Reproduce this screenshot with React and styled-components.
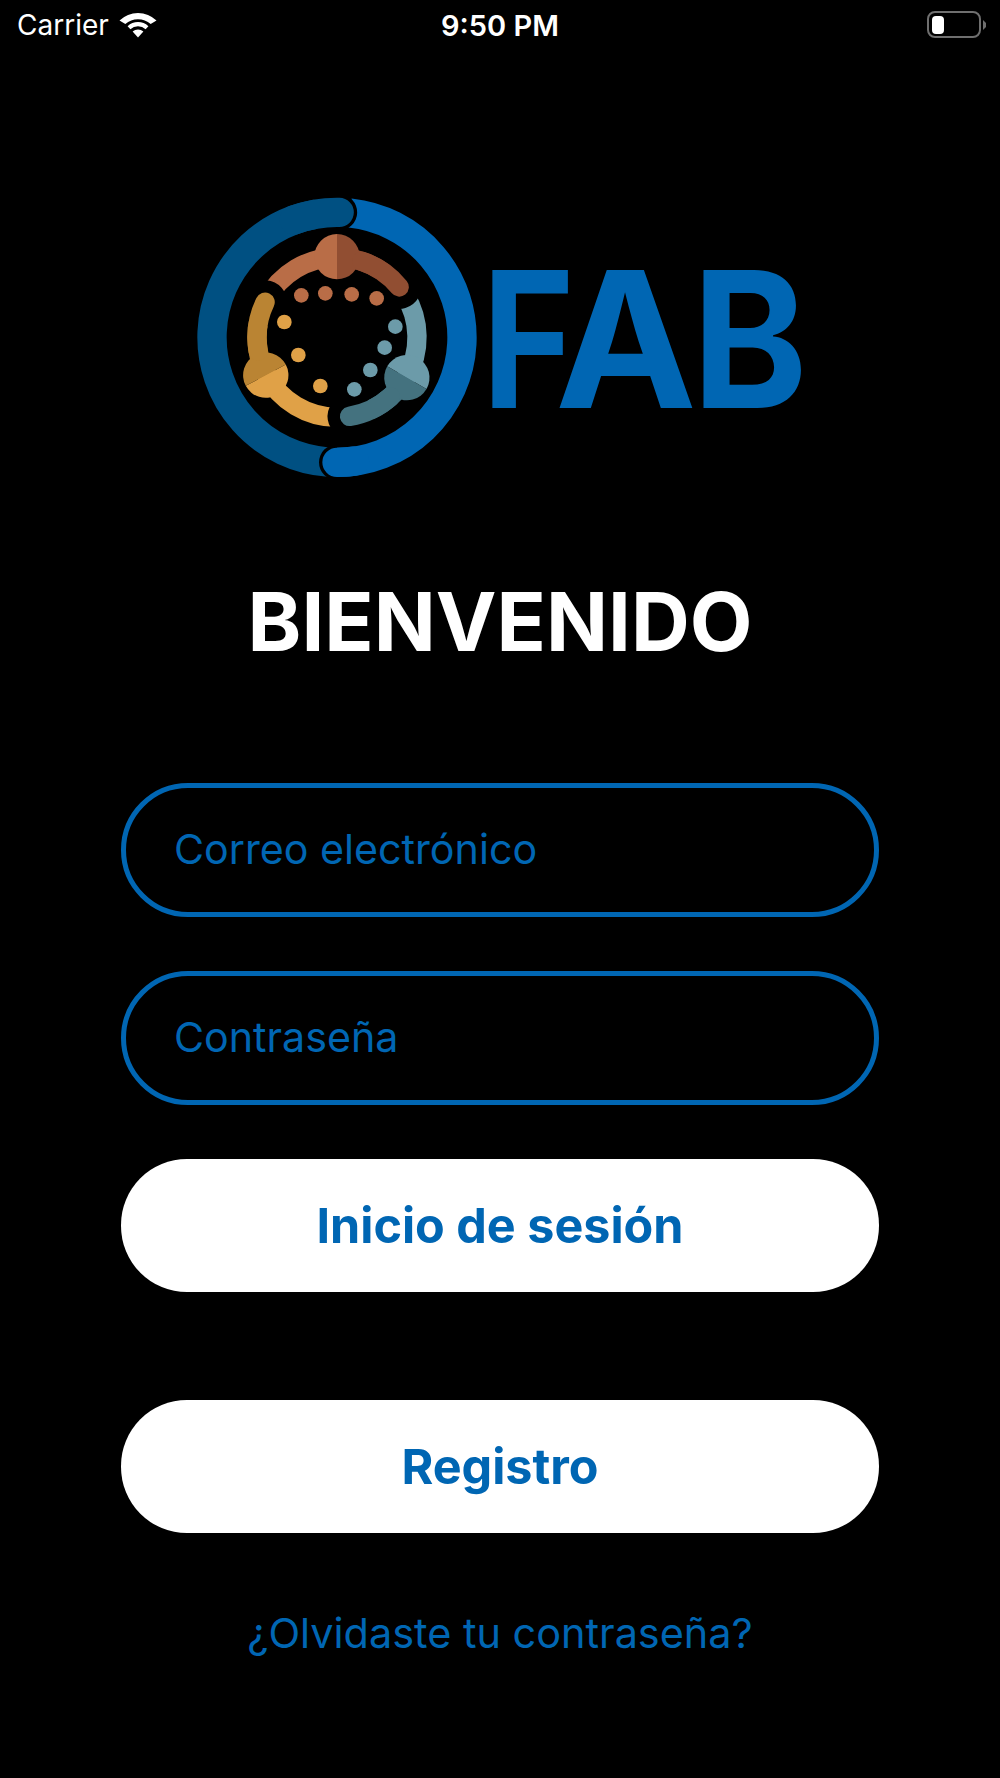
import React from "react";
import styled, { createGlobalStyle } from "styled-components";

const BLUE = "#0066b3";

const GlobalStyle = createGlobalStyle`
  html, body {
    margin: 0;
    padding: 0;
    background: #000;
  }
  * {
    box-sizing: border-box;
  }
`;

const Screen = styled.div`
  display: flex;
  flex-direction: column;
  width: 1000px;
  height: 1778px;
  background: #000;
  font-family: Inter, "Noto Sans", sans-serif;
  overflow: hidden;
`;

const StatusBar = styled.div`
  display: grid;
  grid-template-columns: 1fr auto 1fr;
  align-items: center;
  height: 50px;
  padding: 0 13px;
  color: #fff;
  font-size: 28px;
`;

const StatusLeft = styled.div`
  display: flex;
  align-items: center;
  gap: 10px;
  padding-left: 4px;
`;

const Clock = styled.div`
  font-weight: 600;
  font-size: 29px;
`;

const StatusRight = styled.div`
  display: flex;
  justify-content: flex-end;
`;

const LogoRow = styled.div`
  display: flex;
  align-items: center;
  height: 310px;
  margin-top: 130px;
  padding-left: 180px;
`;

const LogoWord = styled.div`
  display: flex;
  margin-left: 2px;
  margin-top: 8px;
  color: ${BLUE};
  font-weight: 700;
  font-size: 190px;
  line-height: 1;
`;

const LogoLetter = styled.span`
  display: block;
  width: ${(p) => p.$w}px;
  letter-spacing: ${(p) => p.$kern || 0}px;
  transform: scaleX(${(p) => p.$sx});
  transform-origin: left center;
`;

const Title = styled.h1`
  margin: 87px 0 0;
  color: #fff;
  font-size: 81.4px;
  font-weight: 700;
  line-height: 90px;
  text-align: center;
`;

const Form = styled.form`
  display: flex;
  flex-direction: column;
  margin-top: 116px;
  padding: 0 121px;
`;

const Field = styled.input`
  display: block;
  width: 100%;
  height: 134px;
  margin-bottom: 54px;
  padding: 0 48px 3px;
  background: transparent;
  border: 5px solid ${BLUE};
  border-radius: 67px;
  outline: none;
  color: ${BLUE};
  font-family: inherit;
  font-size: 41.2px;

  &::placeholder {
    color: ${BLUE};
    opacity: 1;
  }
`;

const PillButton = styled.button`
  height: 133px;
  margin-top: ${(p) => p.$top}px;
  background: #fff;
  border: 0;
  border-radius: 66px;
  color: ${BLUE};
  font-family: inherit;
  font-size: 48.5px;
  font-weight: 700;
`;

const ForgotLink = styled.a`
  display: block;
  margin-top: 70px;
  color: ${BLUE};
  font-size: 41.4px;
  line-height: 60px;
  text-align: center;
`;

const WifiIcon = () => (
  <svg width="38" height="25" viewBox="0 0 38 25">
    <path d="M19 24.5 L13.6 18.6 A8 8 0 0 1 24.4 18.6 Z" fill="#fff" />
    <path d="M8.6 13.2 A15.2 15.2 0 0 1 29.4 13.2 L26.6 16.3 A11 11 0 0 0 11.4 16.3 Z" fill="#fff" />
    <path d="M0.5 7.6 A26.5 26.5 0 0 1 37.5 7.6 L31.7 11 A19.4 19.4 0 0 0 6.3 11 Z" fill="#fff" />
  </svg>
);

const BatteryIcon = () => (
  <svg width="60" height="28" viewBox="0 0 60 28">
    <rect x="1" y="1" width="52" height="25" rx="7" fill="none" stroke="#6f6f6f" strokeWidth="2" />
    <rect x="5" y="5" width="12" height="18" rx="4" fill="#fff" />
    <path d="M56 9 L59 12 V16 L56 19 Z" fill="#6f6f6f" />
  </svg>
);

const CX = 471;
const CY = 472;

const polar = (deg, r) => {
  const a = (deg * Math.PI) / 180;
  return [CX + r * Math.sin(a), CY - r * Math.cos(a)];
};

// clockwise arc between two angles, measured from twelve o'clock
const arc = (from, to, r) => {
  const [x0, y0] = polar(from, r);
  const [x1, y1] = polar(to, r);
  const large = to - from > 180 ? 1 : 0;
  return `M${x0} ${y0}A${r} ${r} 0 ${large} 1 ${x1} ${y1}`;
};

const FIGURES = [
  { rotate: 0, end: 51, light: "#b96d47", dark: "#914e32" },
  { rotate: 120, end: 51, light: "#6c9ba9", dark: "#44727f" },
  { rotate: 242, end: 54, light: "#e0a147", dark: "#ba8433" },
];

const DOTS = [
  ["#b96d47", [[364, 346], [436, 340], [515, 343], [590, 355]]],
  ["#6c9ba9", [[646, 440], [614, 503], [571, 570], [523, 628]]],
  ["#e0a147", [[313, 426], [355, 525], [421, 618]]],
];

const Stroke = ({ d, color, width, cap = "round" }) => (
  <path d={d} fill="none" stroke={color} strokeWidth={width} strokeLinecap={cap} />
);

const LogoMark = () => (
  <svg width="300" height="310" viewBox="0 0 900 930">
    {/* outer ring, the two ends overlap each other */}
    <Stroke d={arc(184, 361, 375)} color="#005082" width="88" />
    <Stroke d={arc(172, 180, 375)} color="#000" width="108" />
    <Stroke d={arc(6, 180, 375)} color={BLUE} width="88" cap="butt" />
    <Stroke d={arc(172, 180, 375)} color={BLUE} width="88" />
    <Stroke d={arc(355, 361, 375)} color="#000" width="108" />
    <Stroke d={arc(340, 361, 375)} color="#005082" width="88" />

    {FIGURES.map((f) => (
      <g key={f.rotate} transform={`rotate(${f.rotate} ${CX} ${CY})`}>
        <Stroke d={arc(0, f.end, 240)} color={f.dark} width="58" />
        <Stroke d={arc(-62, 0, 240)} color={f.light} width="58" cap="butt" />
        <path d="M471 162A68 68 0 0 0 471 298Z" fill={f.light} />
        <path d="M471 162A68 68 0 0 1 471 298Z" fill={f.dark} />
      </g>
    ))}
    {/* each arm's round end bites into the next figure */}
    {FIGURES.map((f) => (
      <g key={f.rotate} transform={`rotate(${f.rotate} ${CX} ${CY})`}>
        <Stroke d={arc(f.end - 2, f.end, 240)} color="#000" width="132" />
        <Stroke d={arc(18, f.end, 240)} color={f.dark} width="58" />
      </g>
    ))}
    {DOTS.map(([color, points]) =>
      points.map(([x, y]) => <circle key={`${x}-${y}`} cx={x} cy={y} r="22" fill={color} />)
    )}
  </svg>
);

export default function App() {
  return (
    <Screen>
      <GlobalStyle />
      <StatusBar>
        <StatusLeft>
          <span>Carrier</span>
          <WifiIcon />
        </StatusLeft>
        <Clock>9:50 PM</Clock>
        <StatusRight>
          <BatteryIcon />
        </StatusRight>
      </StatusBar>
      <LogoRow>
        <LogoMark />
        <LogoWord>
          <LogoLetter $w={73} $sx={0.83} $kern={-30}>F</LogoLetter>
          <LogoLetter $w={137} $sx={1}>A</LogoLetter>
          <LogoLetter $w={100} $sx={0.92}>B</LogoLetter>
        </LogoWord>
      </LogoRow>
      <Title>BIENVENIDO</Title>
      <Form>
        <Field type="email" placeholder="Correo electrónico" />
        <Field type="password" placeholder="Contraseña" />
        <PillButton type="button" $top={0}>Inicio de sesión</PillButton>
        <PillButton type="button" $top={108}>Registro</PillButton>
        <ForgotLink>¿Olvidaste tu contraseña?</ForgotLink>
      </Form>
    </Screen>
  );
}
